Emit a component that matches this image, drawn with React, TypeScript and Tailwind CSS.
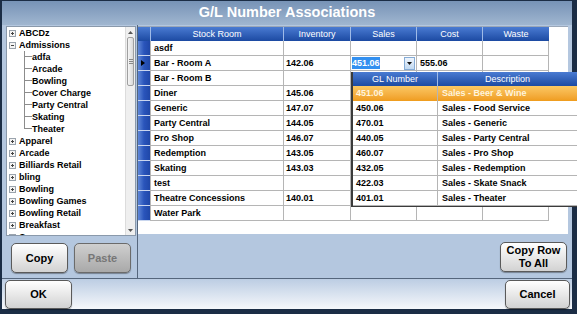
import React from 'react';

type TreeItem = { label: string; kind: 'closed' | 'open' | 'child' | 'last' };

const tree: TreeItem[] = [
  { label: 'ABCDz', kind: 'closed' },
  { label: 'Admissions', kind: 'open' },
  { label: 'adfa', kind: 'child' },
  { label: 'Arcade', kind: 'child' },
  { label: 'Bowling', kind: 'child' },
  { label: 'Cover Charge', kind: 'child' },
  { label: 'Party Central', kind: 'child' },
  { label: 'Skating', kind: 'child' },
  { label: 'Theater', kind: 'last' },
  { label: 'Apparel', kind: 'closed' },
  { label: 'Arcade', kind: 'closed' },
  { label: 'Billiards Retail', kind: 'closed' },
  { label: 'bling', kind: 'closed' },
  { label: 'Bowling', kind: 'closed' },
  { label: 'Bowling Games', kind: 'closed' },
  { label: 'Bowling Retail', kind: 'closed' },
  { label: 'Breakfast', kind: 'closed' },
  { label: 'Camps', kind: 'closed' },
];

const rows = [
  { room: 'asdf', inv: '' },
  { room: 'Bar - Room A', inv: '142.06' },
  { room: 'Bar - Room B', inv: '' },
  { room: 'Diner', inv: '145.06' },
  { room: 'Generic', inv: '147.07' },
  { room: 'Party Central', inv: '144.05' },
  { room: 'Pro Shop', inv: '146.07' },
  { room: 'Redemption', inv: '143.05' },
  { room: 'Skating', inv: '143.03' },
  { room: 'test', inv: '' },
  { room: 'Theatre Concessions', inv: '140.01' },
  { room: 'Water Park', inv: '' },
];

const glList = [
  ['451.06', 'Sales - Beer & Wine'],
  ['450.06', 'Sales - Food Service'],
  ['470.01', 'Sales - Generic'],
  ['440.05', 'Sales - Party Central'],
  ['460.07', 'Sales - Pro Shop'],
  ['432.05', 'Sales - Redemption'],
  ['422.03', 'Sales - Skate Snack'],
  ['401.01', 'Sales - Theater'],
];

const ExpandBox = ({ open }: { open: boolean }) => (
  <svg width="7" height="7" viewBox="0 0 7 7" className="shrink-0">
    <rect x="0.5" y="0.5" width="6" height="6" fill="#f4f4f4" stroke="#9aa3ad" />
    <line x1="2" y1="3.5" x2="5" y2="3.5" stroke="#444" />
    {!open && <line x1="3.5" y1="2" x2="3.5" y2="5" stroke="#444" />}
  </svg>
);

const Arrow = ({ up }: { up: boolean }) => (
  <svg width="5" height="3" viewBox="0 0 5 3">
    <path d={up ? 'M0 3 L2.5 0 L5 3 Z' : 'M0 0 L2.5 3 L5 0 Z'} fill="#555" />
  </svg>
);

const Button = ({ children, disabled, className }: { children: React.ReactNode; disabled?: boolean; className: string }) => (
  <div
    className={`flex items-center justify-center rounded-[5px] border text-[11px] font-bold leading-[13px] text-center shadow-[0_1px_1px_rgba(0,0,0,0.35)] ${
      disabled
        ? 'border-[#6b6b6b] bg-gradient-to-b from-[#cfcfcf] to-[#a9a9a9] text-[#767676]'
        : 'border-[#5a5a5a] bg-gradient-to-b from-[#ffffff] to-[#d2d2d2] text-black'
    } ${className}`}
  >
    {children}
  </div>
);

export default function App() {
  return (
    <div className="relative h-[314px] w-[577px] overflow-hidden bg-[#1b2d45] pl-[2px] pt-[1px] font-['Liberation_Sans',Arial,sans-serif]">
      <div className="flex h-[309px] w-[570px] flex-col">
        {/* title */}
        <div className="flex h-[24px] items-center justify-center bg-gradient-to-b from-[#7793b6] to-[#a0b6d0] text-[14.5px] font-bold text-white">
          G/L Number Associations
        </div>

        {/* main */}
        <div className="flex h-[254px] border-b border-[#55667c] bg-[#b4c7df]">
          {/* left column */}
          <div className="flex w-[136px] flex-col border-r border-[#55667c]">
            <div className="ml-[4px] mt-[1px] flex h-[210px] w-[130px] border border-[#8a99ab] bg-white">
              <div className="flex-1 overflow-hidden">
                {tree.map((t, i) => (
                  <div key={i} className="flex h-[12px] items-center text-[9px] font-bold leading-[12px] text-black">
                    {t.kind === 'child' || t.kind === 'last' ? (
                      <>
                        <div className="w-[17px] shrink-0" />
                        <div className="flex h-[12px] w-[8px] shrink-0 flex-col">
                          <div className="h-[6px] border-b border-l border-[#8c8c8c]" />
                          <div className={`h-[6px] ${t.kind === 'child' ? 'border-l border-[#8c8c8c]' : ''}`} />
                        </div>
                        <span className="whitespace-nowrap">{t.label}</span>
                      </>
                    ) : (
                      <>
                        <div className="ml-[2px] flex">
                          <ExpandBox open={t.kind === 'open'} />
                        </div>
                        <span className="ml-[3px] whitespace-nowrap">{t.label}</span>
                      </>
                    )}
                  </div>
                ))}
              </div>
              {/* scrollbar */}
              <div className="flex w-[10px] shrink-0 flex-col border-l border-[#dcdcdc] bg-[#efefef]">
                <div className="flex h-[10px] items-center justify-center">
                  <Arrow up />
                </div>
                <div className="mx-[1px] flex h-[49px] items-center justify-center rounded-[2px] border border-[#a0a0a0] bg-gradient-to-r from-[#f6f6f6] to-[#d9d9d9]">
                  <div className="flex flex-col gap-[1px]">
                    <div className="h-px w-[4px] bg-[#888]" />
                    <div className="h-px w-[4px] bg-[#888]" />
                    <div className="h-px w-[4px] bg-[#888]" />
                  </div>
                </div>
                <div className="flex-1" />
                <div className="flex h-[10px] items-center justify-center">
                  <Arrow up={false} />
                </div>
              </div>
            </div>
            <div className="ml-[9px] mt-[7px] flex gap-[6px]">
              <Button className="h-[30px] w-[57px]">Copy</Button>
              <Button disabled className="h-[30px] w-[57px]">Paste</Button>
            </div>
          </div>

          {/* right column */}
          <div className="flex w-[434px] flex-col">
            <div className="mt-[1px] h-[208px] w-[430px] border-t border-[#9aa7b8] bg-white">
              {/* header */}
              <div className="flex h-[14px] text-[9px] leading-[14px] text-white">
                <div className="w-[12px] bg-gradient-to-b from-[#4a7bd2] to-[#1c4aa2]" />
                {[
                  ['Stock Room', 'w-[133px]'],
                  ['Inventory', 'w-[67px]'],
                  ['Sales', 'w-[66px]'],
                  ['Cost', 'w-[66px]'],
                  ['Waste', 'w-[67px]'],
                ].map(([h, w]) => (
                  <div key={h} className={`${w} border-l border-[#9fbbe8] bg-gradient-to-b from-[#4a7bd2] to-[#1c4aa2] text-center`}>
                    {h}
                  </div>
                ))}
              </div>
              {rows.map((r, i) => (
                <div key={i} className="flex h-[15px] text-[9px] font-bold leading-[14px] text-black">
                  <div className="flex w-[12px] items-center border-b border-[#c9d6ee] bg-gradient-to-r from-[#6088d8] via-[#2a55bb] to-[#1f47a8] pl-[3px]">
                    {i === 1 && (
                      <svg width="4" height="6" viewBox="0 0 4 6">
                        <path d="M0 0 L4 3 L0 6 Z" fill="#000" />
                      </svg>
                    )}
                  </div>
                  <div className="w-[133px] border-b border-l border-[#b5b5b5] pl-[3px] whitespace-nowrap">{r.room}</div>
                  <div className="w-[67px] border-b border-l border-[#b5b5b5] pl-[2px]">{r.inv}</div>
                  <div className="flex w-[66px] items-center border-b border-l border-[#b5b5b5]">
                    {i === 1 && (
                      <>
                        <span className="ml-[1px] bg-[#3390f0] leading-[12px] text-white">451.06</span>
                        <div className="flex-1" />
                        <div className="mr-[1px] flex h-[13px] w-[11px] items-center justify-center border border-[#86acd6] bg-gradient-to-b from-[#eef5fd] to-[#c2d9f1]">
                          <svg width="5" height="3" viewBox="0 0 5 3">
                            <path d="M0 0 L2.5 3 L5 0 Z" fill="#111" />
                          </svg>
                        </div>
                      </>
                    )}
                  </div>
                  <div className="w-[66px] border-b border-l border-[#b5b5b5] pl-[3px]">{i === 1 ? '555.06' : ''}</div>
                  <div className="w-[67px] border-x border-b border-[#b5b5b5]" />
                </div>
              ))}
            </div>
            <div className="mr-[5px] mt-[8px] flex justify-end">
              <Button className="h-[30px] w-[67px]">
                Copy Row
                <br />
                To All
              </Button>
            </div>
          </div>
        </div>

        {/* bottom bar */}
        <div className="flex h-[30px] items-start justify-between bg-gradient-to-b from-[#bccde3] to-[#f6f8fb] pl-[3px] pr-[2px] pt-[1px]">
          <Button className="h-[29px] w-[67px]">OK</Button>
          <Button className="h-[29px] w-[65px]">Cancel</Button>
        </div>
      </div>

      {/* drop-down list over the grid */}
      <div className="absolute left-[351px] top-[72px] w-[226px] border-b border-l-2 border-[#3b3b3b] bg-white text-[9px] leading-[14px]">
        <div className="flex h-[14px] text-white">
          <div className="w-[84px] bg-gradient-to-b from-[#4a7bd2] to-[#1c4aa2] text-center">GL Number</div>
          <div className="flex-1 border-l border-[#9fbbe8] bg-gradient-to-b from-[#4a7bd2] to-[#1c4aa2] text-center">Description</div>
        </div>
        {glList.map(([n, d], i) => (
          <div
            key={n}
            className={`flex h-[15px] font-bold ${
              i === 0 ? 'bg-gradient-to-b from-[#fbc862] to-[#ef9c1c] text-[#fff4dc]' : 'border-b border-[#b5b5b5] text-black'
            }`}
          >
            <div className="w-[84px] pl-[3px]">{n}</div>
            <div className="flex-1 border-l border-[#b5b5b5] pl-[4px] whitespace-nowrap">{d}</div>
          </div>
        ))}
      </div>
    </div>
  );
}
